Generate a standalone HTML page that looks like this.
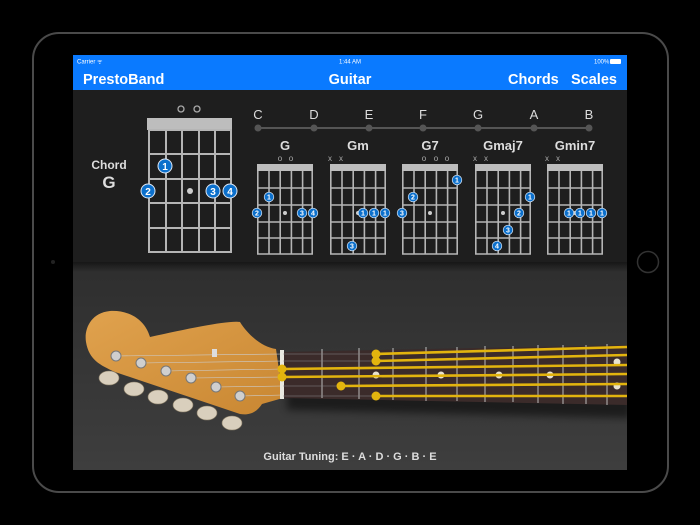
<!DOCTYPE html>
<html><head><meta charset="utf-8"><style>
html,body{margin:0;padding:0;background:#000;width:700px;height:525px;overflow:hidden}
svg{display:block}
text{font-family:"Liberation Sans",sans-serif}
</style></head><body>
<svg width="700" height="525" viewBox="0 0 700 525" xmlns="http://www.w3.org/2000/svg">
<defs>
<linearGradient id="bg" x1="0" y1="0" x2="0" y2="1"><stop offset="0" stop-color="#262626"/><stop offset="0.5" stop-color="#2e2e2e"/><stop offset="1" stop-color="#3e3e3e"/></linearGradient>
<linearGradient id="wood" x1="0" y1="0" x2="1" y2="1"><stop offset="0" stop-color="#e0a24e"/><stop offset="1" stop-color="#c98732"/></linearGradient>
<linearGradient id="sh" x1="0" y1="0" x2="0" y2="1"><stop offset="0" stop-color="#000" stop-opacity=".5"/><stop offset="1" stop-color="#000" stop-opacity="0"/></linearGradient>
<filter id="blur"><feGaussianBlur stdDeviation="4"/></filter>
<g id="sg" fill="none" stroke="#b5b5b5" stroke-width="1.6">
<rect x="0" y="0" width="56" height="7" fill="#bdbdbd" stroke="none"/>
<path d="M0.8 7V90M12 7V90M23.2 7V90M34.4 7V90M45.6 7V90M55.2 7V90M0 24H56M0 41H56M0 58H56M0 74H56M0 90H56"/>
</g>
</defs>
<rect width="700" height="525" fill="#000"/>
<rect x="33" y="33" width="635" height="459" rx="26" fill="#000" stroke="#4a4a4a" stroke-width="2"/>
<circle cx="648" cy="262" r="10.5" fill="none" stroke="#333" stroke-width="1.5"/>
<circle cx="53" cy="262" r="2" fill="#222"/>
<rect x="73" y="55" width="554" height="415" fill="url(#bg)"/>
<rect x="73" y="55" width="554" height="35" fill="#0a7aff"/>
<text x="77" y="63.5" font-size="6" fill="#fff">Carrier ᯤ</text>
<text x="350" y="63.5" font-size="6" fill="#fff" text-anchor="middle">1:44 AM</text>
<text x="594" y="63.5" font-size="6" fill="#fff">100%</text>
<rect x="610" y="59" width="11" height="5" rx="1" fill="#fff"/>
<text x="83" y="84" font-size="14.5" font-weight="bold" fill="#fff">PrestoBand</text>
<text x="350" y="84" font-size="14.5" font-weight="bold" fill="#fff" text-anchor="middle">Guitar</text>
<text x="508" y="84" font-size="14.5" font-weight="bold" fill="#fff">Chords</text>
<text x="571" y="84" font-size="14.5" font-weight="bold" fill="#fff">Scales</text>
<rect x="73" y="90" width="554" height="172" fill="#1e1e1e"/>
<rect x="73" y="262" width="554" height="10" fill="url(#sh)"/>
<text x="109" y="169" font-size="12" font-weight="bold" fill="#ddd" text-anchor="middle">Chord</text>
<text x="109" y="188" font-size="17" font-weight="bold" fill="#ddd" text-anchor="middle">G</text>
<circle cx="181" cy="109" r="3" fill="none" stroke="#aaa" stroke-width="1.3"/>
<circle cx="197" cy="109" r="3" fill="none" stroke="#aaa" stroke-width="1.3"/>
<rect x="147" y="118" width="85" height="12" fill="#bdbdbd"/>
<path d="M149 130V253M166 130V253M182 130V253M199 130V253M215 130V253M231 130V253M148 130H232M148 154H232M148 179H232M148 203H232M148 228H232M148 252H232" stroke="#b5b5b5" stroke-width="2" fill="none"/>
<circle cx="190" cy="191" r="3" fill="#ccc"/>
<g stroke="#dfe9f5" stroke-width="1" fill="#0c70cc">
<circle cx="165" cy="166" r="7"/><circle cx="148" cy="191" r="7"/><circle cx="213" cy="191" r="7"/><circle cx="230" cy="191" r="7"/></g>
<g font-size="10" font-weight="bold" fill="#fff" text-anchor="middle">
<text x="165" y="170">1</text><text x="148" y="195">2</text><text x="213" y="195">3</text><text x="230" y="195">4</text></g>
<line x1="258" y1="128" x2="589" y2="128" stroke="#555" stroke-width="2"/>
<g fill="#555"><circle cx="258" cy="128" r="3.5"/><circle cx="314" cy="128" r="3.5"/><circle cx="369" cy="128" r="3.5"/><circle cx="423" cy="128" r="3.5"/><circle cx="478" cy="128" r="3.5"/><circle cx="534" cy="128" r="3.5"/><circle cx="589" cy="128" r="3.5"/></g>
<g font-size="13" fill="#ddd" text-anchor="middle">
<text x="258" y="119">C</text><text x="314" y="119">D</text><text x="369" y="119">E</text><text x="423" y="119">F</text><text x="478" y="119">G</text><text x="534" y="119">A</text><text x="589" y="119">B</text></g>
<g font-size="13" font-weight="bold" fill="#ddd" text-anchor="middle">
<text x="285" y="150">G</text><text x="358" y="150">Gm</text><text x="430" y="150">G7</text><text x="503" y="150">Gmaj7</text><text x="575" y="150">Gmin7</text></g>
<g font-size="8" fill="#aaa" text-anchor="middle">
<text x="280" y="161">o</text><text x="291" y="161">o</text>
<text x="330" y="161">x</text><text x="341" y="161">x</text>
<text x="424" y="161">o</text><text x="436" y="161">o</text><text x="447" y="161">o</text>
<text x="475" y="161">x</text><text x="486" y="161">x</text>
<text x="547" y="161">x</text><text x="558" y="161">x</text></g>
<use href="#sg" x="257" y="164"/><use href="#sg" x="330" y="164"/><use href="#sg" x="402" y="164"/><use href="#sg" x="475" y="164"/><use href="#sg" x="547" y="164"/>
<g fill="#ccc"><circle cx="285" cy="213" r="2"/><circle cx="358" cy="213" r="2"/><circle cx="430" cy="213" r="2"/><circle cx="503" cy="213" r="2"/><circle cx="575" cy="213" r="2"/></g>
<g stroke="#dfe9f5" stroke-width=".7" fill="#0c70cc">
<circle cx="269" cy="197" r="4.8"/><circle cx="257" cy="213" r="4.8"/><circle cx="302" cy="213" r="4.8"/><circle cx="313" cy="213" r="4.8"/>
<circle cx="363" cy="213" r="4.8"/><circle cx="374" cy="213" r="4.8"/><circle cx="385" cy="213" r="4.8"/><circle cx="352" cy="246" r="4.8"/>
<circle cx="457" cy="180" r="4.8"/><circle cx="413" cy="197" r="4.8"/><circle cx="402" cy="213" r="4.8"/>
<circle cx="530" cy="197" r="4.8"/><circle cx="519" cy="213" r="4.8"/><circle cx="508" cy="230" r="4.8"/><circle cx="497" cy="246" r="4.8"/>
<circle cx="569" cy="213" r="4.8"/><circle cx="580" cy="213" r="4.8"/><circle cx="591" cy="213" r="4.8"/><circle cx="602" cy="213" r="4.8"/></g>
<g font-size="7" font-weight="bold" fill="#fff" text-anchor="middle">
<text x="269" y="199.5">1</text><text x="257" y="215.5">2</text><text x="302" y="215.5">3</text><text x="313" y="215.5">4</text>
<text x="363" y="215.5">1</text><text x="374" y="215.5">1</text><text x="385" y="215.5">1</text><text x="352" y="248.5">3</text>
<text x="457" y="182.5">1</text><text x="413" y="199.5">2</text><text x="402" y="215.5">3</text>
<text x="530" y="199.5">1</text><text x="519" y="215.5">2</text><text x="508" y="232.5">3</text><text x="497" y="248.5">4</text>
<text x="569" y="215.5">1</text><text x="580" y="215.5">1</text><text x="591" y="215.5">1</text><text x="602" y="215.5">1</text></g>
<path d="M283 352 L627 345 L627 410 L283 402 Z" fill="#000" opacity=".5" filter="url(#blur)" transform="translate(4,8)"/>
<path d="M283 352 L627 345 L627 405 L283 398 Z" fill="#3b2b2a"/>
<path d="M276 349 C262 347 248 335 240 322 C230 320 190 328 150 337 C145 320 130 310 110 311 C90 313 84 330 86 342 C89 360 100 365 115 372 L240 414 C252 416 258 410 262 404 L283 398 Z" fill="url(#wood)"/>
<g fill="#d9cfbd" stroke="#8a7e68" stroke-width=".6">
<ellipse cx="109" cy="378" rx="10" ry="7"/><ellipse cx="134" cy="389" rx="10" ry="7"/><ellipse cx="158" cy="397" rx="10" ry="7"/><ellipse cx="183" cy="405" rx="10" ry="7"/><ellipse cx="207" cy="413" rx="10" ry="7"/><ellipse cx="232" cy="423" rx="10" ry="7"/></g>
<g stroke="#ccc" stroke-width=".6">
<line x1="116" y1="356" x2="283" y2="354"/><line x1="141" y1="363" x2="283" y2="361"/><line x1="166" y1="371" x2="283" y2="369"/><line x1="191" y1="378" x2="283" y2="377"/><line x1="216" y1="387" x2="283" y2="386"/><line x1="240" y1="396" x2="283" y2="395"/></g>
<g fill="#cfcfcf" stroke="#777" stroke-width="1">
<circle cx="116" cy="356" r="5"/><circle cx="141" cy="363" r="5"/><circle cx="166" cy="371" r="5"/><circle cx="191" cy="378" r="5"/><circle cx="216" cy="387" r="5"/><circle cx="240" cy="396" r="5"/></g>
<rect x="212" y="349" width="5" height="8" fill="#ddd"/>
<rect x="280" y="350" width="4" height="49" fill="#e8e8e0"/>
<g stroke="#bbb" stroke-width="1">
<path d="M322 349V398M359 348V399M393 348V400M426 347V401M457 347V401M485 346V402M513 346V402M538 345V403M563 345V404M586 345V404M607 344V405"/></g>
<g fill="#e8e2d0"><circle cx="376" cy="375" r="3.5"/><circle cx="441" cy="375" r="3.5"/><circle cx="499" cy="375" r="3.5"/><circle cx="550" cy="375" r="3.5"/><circle cx="617" cy="362" r="3.5"/><circle cx="617" cy="386" r="3.5"/></g>
<g stroke="#888" stroke-width=".6"><line x1="283" y1="354" x2="376" y2="354"/><line x1="283" y1="361" x2="376" y2="361"/><line x1="283" y1="386" x2="340" y2="386"/><line x1="283" y1="396" x2="376" y2="396"/></g>
<g stroke="#e3b40e" stroke-width="2.6">
<line x1="376" y1="354" x2="627" y2="347"/><line x1="376" y1="361" x2="627" y2="355"/>
<line x1="283" y1="369" x2="627" y2="365"/><line x1="283" y1="377" x2="627" y2="374"/>
<line x1="340" y1="386" x2="627" y2="384"/><line x1="376" y1="396" x2="627" y2="396"/></g>
<g fill="#e3b40e"><circle cx="376" cy="354" r="4.5"/><circle cx="376" cy="361" r="4.5"/><circle cx="376" cy="396" r="4.5"/><circle cx="341" cy="386" r="4.5"/><circle cx="282" cy="369" r="4.5"/><circle cx="282" cy="377" r="4.5"/></g>
<text x="350" y="460" font-size="11" font-weight="bold" fill="#ddd" text-anchor="middle">Guitar Tuning: E · A · D · G · B · E</text>
</svg>
</body></html>
